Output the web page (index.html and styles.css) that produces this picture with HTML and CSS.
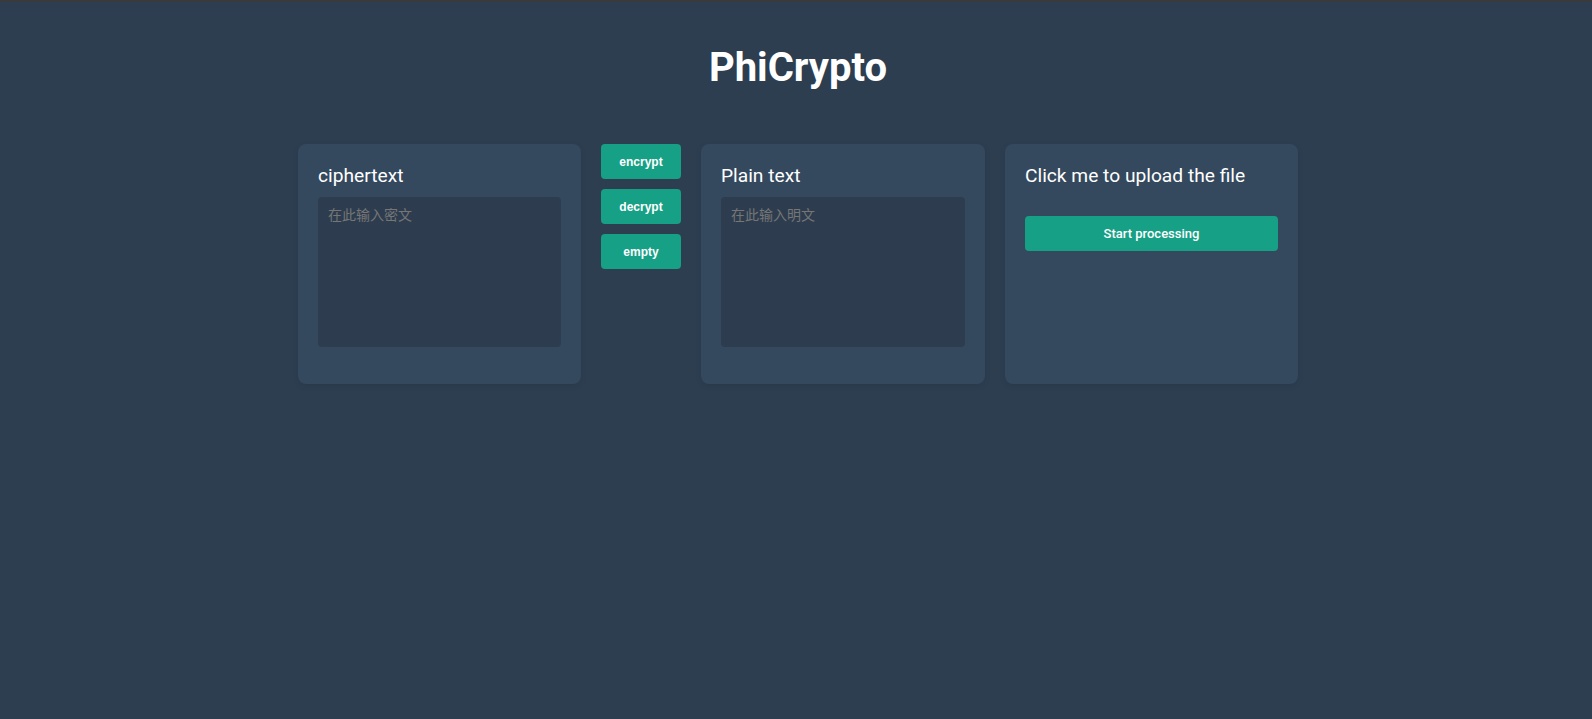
FILE: index.html
```html
<!DOCTYPE html>
<html lang="en">
<head>
<meta charset="utf-8">
<title>PhiCrypto</title>
<link rel="stylesheet" href="styles.css">
</head>
<body>
<header class="header">
  <h1 class="title">PhiCrypto</h1>
</header>
<main class="main">
  <section class="card card-cipher">
    <h2 class="card-title">ciphertext</h2>
    <textarea class="text-box" placeholder="在此输入密文"></textarea>
  </section>
  <div class="actions">
    <button class="btn-small">encrypt</button>
    <button class="btn-small">decrypt</button>
    <button class="btn-small">empty</button>
  </div>
  <section class="card card-plain">
    <h2 class="card-title">Plain text</h2>
    <textarea class="text-box" placeholder="在此输入明文"></textarea>
  </section>
  <section class="card card-file">
    <label class="card-title file-label">Click me to upload the file<input type="file" class="file-input"></label>
    <button class="btn-wide">Start processing</button>
  </section>
</main>
</body>
</html>
```
FILE: styles.css
```css
* { box-sizing: border-box; }
html, body { height: 100%; }
body {
  margin: 0;
  background: #2c3e50;
  border-top: 2px solid #3a3a3c;
  font-family: Roboto, "Noto Sans", sans-serif;
  color: #ffffff;
}
.header {
  padding-top: 42px;
  text-align: center;
}
.title {
  margin: 0;
  font-size: 40px;
  font-weight: 700;
  line-height: 47px;
  padding-left: 4px;
}
.main {
  display: flex;
  justify-content: center;
  align-items: flex-start;
  gap: 20px;
  margin-top: 53px;
  padding-left: 4px;
}
.card {
  background: #34495e;
  border-radius: 8px;
  padding: 21px 20px 20px;
  height: 240px;
  box-shadow: 0 2px 6px rgba(0, 0, 0, 0.08);
}
.card-cipher { width: 283px; }
.card-plain { width: 284px; }
.card-file { width: 293px; }
.card-title {
  display: block;
  margin: 0;
  font-size: 19.2px;
  font-weight: 400;
  line-height: 22px;
  color: #ffffff;
}
.file-label { cursor: pointer; }
.file-input { display: none; }
.text-box {
  display: block;
  margin-top: 10px;
  width: 100%;
  height: 150px;
  padding: 9px 10px;
  border: none;
  border-radius: 4px;
  background: #2d3d4f;
  color: #dddddd;
  font-family: "Noto Sans CJK SC", "Noto Sans", sans-serif;
  font-size: 14px;
  line-height: 16px;
  resize: none;
  outline: none;
}
.text-box::placeholder { color: #767676; }
.actions {
  display: flex;
  flex-direction: column;
  gap: 10px;
}
.btn-small {
  width: 80px;
  height: 35px;
  border: none;
  border-radius: 4px;
  background: #16a085;
  color: #ffffff;
  font-family: "Liberation Sans", Arial, sans-serif;
  font-size: 12px;
  font-weight: 700;
  cursor: pointer;
}
.btn-wide {
  display: block;
  width: 100%;
  height: 35px;
  margin-top: 29px;
  border: none;
  border-radius: 4px;
  background: #16a085;
  color: #ffffff;
  font-family: Roboto, sans-serif;
  font-size: 13px;
  font-weight: 500;
  cursor: pointer;
}
```
